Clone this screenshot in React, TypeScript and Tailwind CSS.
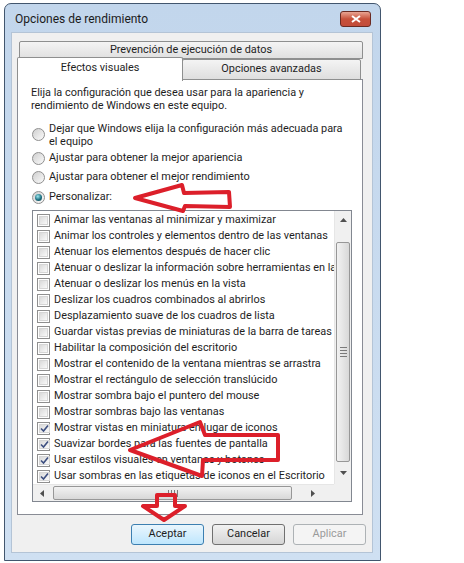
import React from 'react'

const items: { label: string; on: boolean }[] = [
  { label: 'Animar las ventanas al minimizar y maximizar', on: false },
  { label: 'Animar los controles y elementos dentro de las ventanas', on: false },
  { label: 'Atenuar los elementos después de hacer clic', on: false },
  { label: 'Atenuar o deslizar la información sobre herramientas en la vista', on: false },
  { label: 'Atenuar o deslizar los menús en la vista', on: false },
  { label: 'Deslizar los cuadros combinados al abrirlos', on: false },
  { label: 'Desplazamiento suave de los cuadros de lista', on: false },
  { label: 'Guardar vistas previas de miniaturas de la barra de tareas', on: false },
  { label: 'Habilitar la composición del escritorio', on: false },
  { label: 'Mostrar el contenido de la ventana mientras se arrastra', on: false },
  { label: 'Mostrar el rectángulo de selección translúcido', on: false },
  { label: 'Mostrar sombra bajo el puntero del mouse', on: false },
  { label: 'Mostrar sombras bajo las ventanas', on: false },
  { label: 'Mostrar vistas en miniatura en lugar de iconos', on: true },
  { label: 'Suavizar bordes para las fuentes de pantalla', on: true },
  { label: 'Usar estilos visuales en ventanas y botones', on: true },
  { label: 'Usar sombras en las etiquetas de iconos en el Escritorio', on: true },
]

function Check({ on }: { on: boolean }) {
  return (
    <span className="w-[13px] h-[13px] shrink-0 border border-[#8f8f8f] bg-white p-px flex">
      <span className="flex-1 border border-[#d6d6d6] bg-linear-to-br from-[#dadada] to-[#fafafa] flex items-center justify-center">
        {on && (
          <svg viewBox="0 0 9 9" className="w-[9px] h-[9px]">
            <path d="M1 4.5 L3.5 7 L8 1.5" fill="none" stroke="#3d4f80" strokeWidth="1.6" />
          </svg>
        )}
      </span>
    </span>
  )
}

function Radio({ on }: { on?: boolean }) {
  return (
    <span className="w-[13px] h-[13px] shrink-0 rounded-full border border-[#8f8f8f] bg-linear-to-br from-[#cfcfcf] to-[#fbfbfb] flex items-center justify-center">
      {on && <span className="w-[7px] h-[7px] rounded-full bg-[radial-gradient(circle_at_40%_35%,#9be8f0,#1d6f80_55%,#0d3f4c)]" />}
    </span>
  )
}

function Btn({ label, primary, disabled }: { label: string; primary?: boolean; disabled?: boolean }) {
  return (
    <div
      className={`w-[73px] h-[21px] rounded-[3px] border flex items-center justify-center ${
        primary
          ? 'border-[#3c7fb1] bg-linear-to-b from-[#eaf6fd] to-[#bee6fd] text-[#1e1e1e]'
          : disabled
          ? 'border-[#adb2b5] bg-[#f4f4f4] text-[#9a9a9a]'
          : 'border-[#707070] bg-linear-to-b from-[#f2f2f2] to-[#d5d5d5] text-[#1e1e1e]'
      }`}
    >
      {label}
    </div>
  )
}

export default function App() {
  return (
    <div
      className="relative w-[464px] h-[563px] bg-white overflow-hidden pl-[4px] pt-[3px] text-[10.9px] text-[#1e1e1e]"
      style={{ fontFamily: 'Roboto, "Liberation Sans", sans-serif' }}
    >
      {/* Window */}
      <div className="w-[377px] h-[558px] border border-[#42566e] rounded-t-[7px] bg-linear-to-b from-[#c2d6ec] to-[#cfe0f2] flex flex-col">
        {/* Title bar */}
        <div className="h-[28px] shrink-0 flex items-center justify-between pl-[10px] pr-[9px]">
          <span className="text-[12px] text-[#1b1b1b] pt-[2px]">Opciones de rendimiento</span>
          <div className="w-[31px] h-[16px] mt-[2px] rounded-[3px] border border-[#6b2a22] bg-linear-to-b from-[#e8a493] via-[#c7503a] to-[#c24c3a] flex items-center justify-center">
            <svg viewBox="0 0 10 8" className="w-[10px] h-[8px]">
              <path d="M1 1 L9 7 M9 1 L1 7" stroke="white" strokeWidth="2" />
            </svg>
          </div>
        </div>

        {/* Client area */}
        <div className="flex-1 ml-[6px] mr-[7px] mb-[7px] bg-[#f0f0f0] border border-[#b4c4d6] flex flex-col pt-[8px] pl-[5px]">
          {/* Tabs */}
          <div className="w-[344px] h-[18px] ml-[2px] border border-[#8e8f8f] rounded-t-[2px] bg-linear-to-b from-[#f4f4f4] to-[#e0e0e0] flex items-center justify-center">
            Prevención de ejecución de datos
          </div>
          <div className="flex h-[23px] -mt-[2px] relative z-10">
            <div className="w-[166px] h-[24px] bg-white border border-b-0 border-[#8e8f8f] rounded-t-[2px] flex items-center justify-center pb-[2px]">
              Efectos visuales
            </div>
            <div className="w-[179px] h-[21px] mt-[2px] -ml-px border border-[#8e8f8f] rounded-t-[2px] bg-linear-to-b from-[#f4f4f4] to-[#dedede] flex items-center justify-center">
              Opciones avanzadas
            </div>
          </div>

          {/* Tab panel */}
          <div className="w-[346px] h-[436px] -mt-px border border-[#898c95] bg-white flex flex-col pt-[6px] pl-[14px]">
            <p className="leading-[13px] -ml-px">
              Elija la configuración que desea usar para la apariencia y
              <br />
              rendimiento de Windows en este equipo.
            </p>

            <div className="mt-[9px] flex items-center gap-[4px] h-[27px]">
              <Radio />
              <span className="leading-[13px]">
                Dejar que Windows elija la configuración más adecuada para
                <br />
                el equipo
              </span>
            </div>
            <div className="mt-[2px] flex items-center gap-[4px] h-[17px]">
              <Radio />
              <span>Ajustar para obtener la mejor apariencia</span>
            </div>
            <div className="mt-[2px] flex items-center gap-[4px] h-[17px]">
              <Radio />
              <span>Ajustar para obtener el mejor rendimiento</span>
            </div>
            <div className="mt-[3px] flex items-center gap-[4px] h-[17px]">
              <Radio on />
              <span>Personalizar:</span>
            </div>

            {/* List box */}
            <div className="mt-[4px] w-[320px] h-[292px] border border-[#828790] grid grid-cols-[301px_17px] grid-rows-[273px_17px]">
              <div className="overflow-hidden pt-px">
                {items.map((it) => (
                  <div key={it.label} className="h-[16px] flex items-center gap-[4px] pl-[4px] whitespace-nowrap">
                    <Check on={it.on} />
                    <span>{it.label}</span>
                  </div>
                ))}
              </div>

              {/* Vertical scrollbar */}
              <div className="bg-[#f0f0f0] border-l border-[#e6e6e6] flex flex-col items-center">
                <div className="h-[17px] w-full flex items-center justify-center">
                  <svg viewBox="0 0 7 4" className="w-[7px] h-[4px]">
                    <path d="M0 4 L3.5 0 L7 4 Z" fill="#505050" />
                  </svg>
                </div>
                <div className="mt-[14px] w-[14px] h-[220px] rounded-[2px] border border-[#979797] bg-linear-to-r from-[#f2f2f2] to-[#d8d8d8] flex flex-col items-center justify-center gap-[2px]">
                  <span className="w-[7px] h-px bg-[#7a7a7a]" />
                  <span className="w-[7px] h-px bg-[#7a7a7a]" />
                  <span className="w-[7px] h-px bg-[#7a7a7a]" />
                  <span className="w-[7px] h-px bg-[#7a7a7a]" />
                </div>
                <div className="flex-1 w-full flex items-center justify-center">
                  <svg viewBox="0 0 7 4" className="w-[7px] h-[4px]">
                    <path d="M0 0 L3.5 4 L7 0 Z" fill="#505050" />
                  </svg>
                </div>
              </div>

              {/* Horizontal scrollbar */}
              <div className="bg-[#f0f0f0] border-t border-[#e6e6e6] flex items-center">
                <div className="w-[17px] h-full flex items-center justify-center">
                  <svg viewBox="0 0 4 7" className="w-[4px] h-[7px]">
                    <path d="M4 0 L0 3.5 L4 7 Z" fill="#505050" />
                  </svg>
                </div>
                <div className="ml-[3px] w-[239px] h-[14px] rounded-[2px] border border-[#979797] bg-linear-to-b from-[#f2f2f2] to-[#d8d8d8] flex items-center justify-center gap-[2px]">
                  <span className="w-px h-[7px] bg-[#7a7a7a]" />
                  <span className="w-px h-[7px] bg-[#7a7a7a]" />
                  <span className="w-px h-[7px] bg-[#7a7a7a]" />
                  <span className="w-px h-[7px] bg-[#7a7a7a]" />
                </div>
                <div className="flex-1 h-full flex items-center justify-center">
                  <svg viewBox="0 0 4 7" className="w-[4px] h-[7px]">
                    <path d="M0 0 L4 3.5 L0 7 Z" fill="#505050" />
                  </svg>
                </div>
              </div>
              <div className="bg-[#f0f0f0]" />
            </div>
          </div>

          {/* Buttons */}
          <div className="mt-[9px] flex justify-end gap-[8px] pr-[6px]">
            <Btn label="Aceptar" primary />
            <Btn label="Cancelar" />
            <Btn label="Aplicar" disabled />
          </div>
        </div>
      </div>

      {/* Red annotation arrows */}
      <svg className="absolute inset-0 w-[464px] h-[563px] pointer-events-none" viewBox="0 0 464 563">
        <g fill="none" stroke="#dc1f2a" strokeWidth="4" strokeLinejoin="round">
          <polygon points="135,198 182,185 184,193 229,192 230,207 185,206 183,211" />
          <polygon points="130,450 200,422 205,435 278,435 278,460 203,460 202,476" />
          <polygon points="157,495 175,495 175,506 185,506 164,520 143,506 157,506" />
        </g>
      </svg>
    </div>
  )
}
